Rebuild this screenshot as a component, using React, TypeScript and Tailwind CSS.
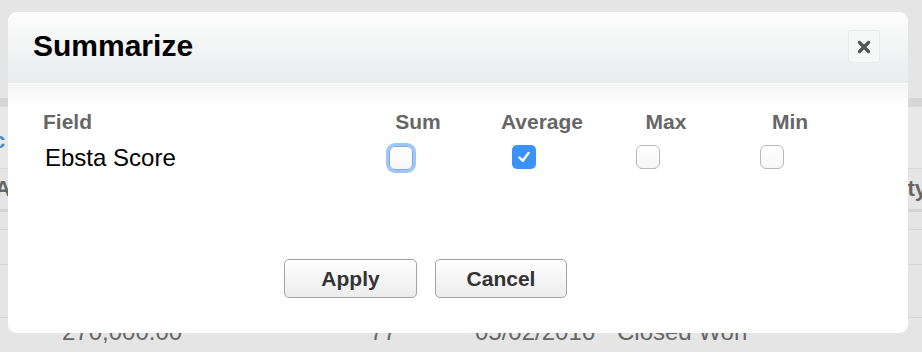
import React from "react";

function Box({ checked, focused }: { checked?: boolean; focused?: boolean }) {
  if (checked) {
    return (
      <div className="w-[24px] h-[24px] rounded-[5px] bg-[#3a91f6] flex items-center justify-center">
        <svg width="14" height="14" viewBox="0 0 14 14">
          <polyline points="2.5,7.5 5.8,10.8 11.5,3" fill="none" stroke="#ffffff" strokeWidth="2.4" strokeLinecap="round" strokeLinejoin="round" />
        </svg>
      </div>
    );
  }
  return (
    <div
      className={
        focused
          ? "w-[24px] h-[24px] rounded-[6px] border border-[#7ea9df] bg-gradient-to-b from-[#ffffff] to-[#f6f6f6] shadow-[0_0_0_3px_#9cc7f8]"
          : "w-[24px] h-[24px] rounded-[6px] border border-[#b9b9b9] bg-gradient-to-b from-[#ffffff] to-[#f6f6f6]"
      }
    />
  );
}

function Btn({ label, w }: { label: string; w: string }) {
  return (
    <button
      className={`${w} h-[39px] rounded-[5px] border border-[#a3a3a3] bg-gradient-to-b from-[#ffffff] to-[#ececec] text-[21px] font-bold text-[#333333] leading-none flex items-center justify-center`}
    >
      {label}
    </button>
  );
}

export default function App() {
  const font = { fontFamily: '"Liberation Sans", Arial, sans-serif' };
  return (
    <div className="relative w-[922px] h-[352px] bg-[#e5e5e5] overflow-hidden" style={font}>
      {/* background page */}
      <div className="flex flex-col">
        <div className="h-[98px]" />
        <div className="h-[9px] bg-[#d6d6d6]" />
        <div className="h-[61px] bg-[#e8e8e8] flex items-center">
          <span className="ml-[-7px] text-[22px] font-bold text-[#4a8bc4] leading-none mt-[6px]">c</span>
        </div>
        <div className="h-[44px] bg-[#e5e5e5] border-t border-[#dadada] border-b-[3px] border-b-[#d2d2d2] flex items-center justify-between">
          <span className="ml-[-5px] text-[22px] font-bold text-[#666] leading-none">A</span>
          <span className="mr-[-5px] text-[22px] font-bold text-[#666] leading-none">ty</span>
        </div>
        <div className="h-[18px] border-b border-[#d8d8d8]" />
        <div className="h-[35px] border-b border-[#d8d8d8]" />
        <div className="h-[53px] border-b border-[#d8d8d8]" />
        <div className="h-[40px] relative text-[24px] text-[#666] leading-none">
          <span className="absolute left-[62px] top-[2px]">270,000.00</span>
          <span className="absolute left-[370px] top-[2px]">77</span>
          <span className="absolute left-[475px] top-[2px]">05/02/2016</span>
          <span className="absolute left-[617px] top-[2px]">Closed Won</span>
        </div>
      </div>

      {/* modal */}
      <div className="absolute left-[8px] top-[12px] w-[900px] h-[321px] rounded-[9px] bg-white overflow-hidden flex flex-col">
        <div className="h-[72px] bg-gradient-to-b from-[#fdfdfd] to-[#e9ebec] flex justify-between border-b border-white">
          <div className="pl-[25px] pt-[19px] text-[30px] leading-[30px] font-bold text-black">Summarize</div>
          <div className="mt-[18px] mr-[28px] w-[32px] h-[33px] rounded-[3px] border border-[#ebebeb] bg-[#f6f7f7] flex items-center justify-center">
            <svg width="14" height="14" viewBox="0 0 14 14">
              <path d="M2.5 2.5 L11.5 11.5 M11.5 2.5 L2.5 11.5" stroke="#555555" strokeWidth="3.4" strokeLinecap="round" />
            </svg>
          </div>
        </div>
        <div className="flex-1 bg-gradient-to-b from-[#f3f4f4] to-white to-[24px] flex flex-col pl-[35px]">
          <div className="mt-[27px] flex text-[21px] leading-[21px] font-bold text-[#666666]">
            <div className="w-[313px]">Field</div>
            <div className="w-[124px] text-center">Sum</div>
            <div className="w-[124px] text-center">Average</div>
            <div className="w-[124px] text-center">Max</div>
            <div className="w-[124px] text-center">Min</div>
          </div>
          <div className="mt-[13px] flex h-[26px]">
            <div className="w-[313px] pl-[2px] text-[24px] leading-[26px] text-black">Ebsta Score</div>
            <div className="w-[124px] pl-[33px] pt-[1px]"><Box focused /></div>
            <div className="w-[124px] pl-[32px]"><Box checked /></div>
            <div className="w-[124px] pl-[32px]"><Box /></div>
            <div className="w-[124px] pl-[32px]"><Box /></div>
          </div>
          <div className="mt-[88px] pl-[241px] flex gap-[18px]">
            <Btn label="Apply" w="w-[133px]" />
            <Btn label="Cancel" w="w-[132px]" />
          </div>
        </div>
      </div>
    </div>
  );
}
